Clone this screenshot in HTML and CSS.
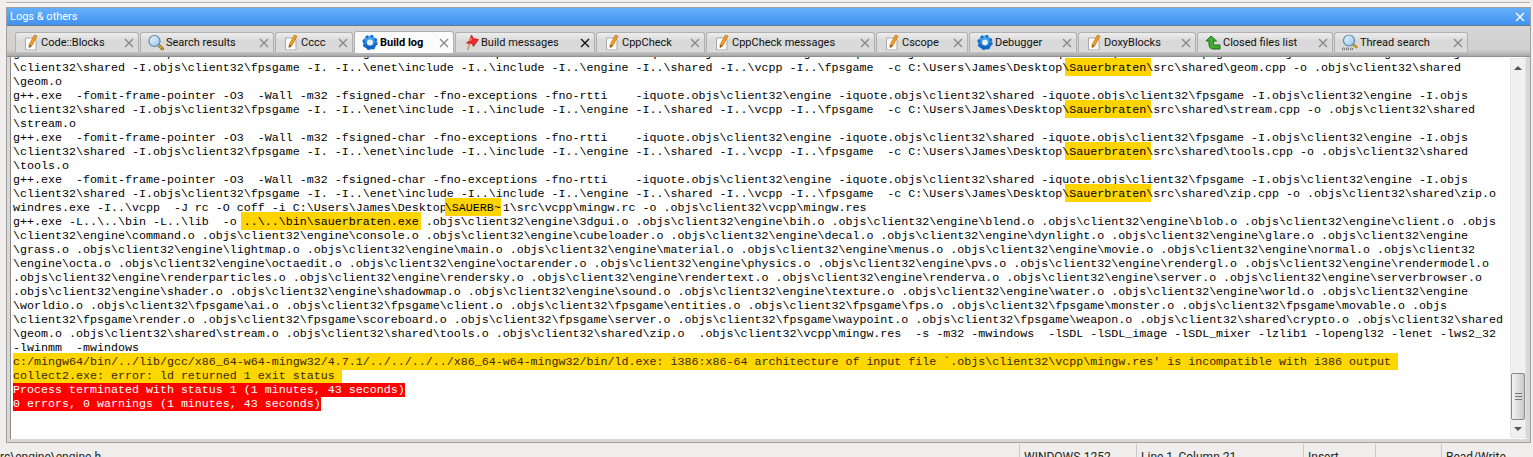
FILE: index.html
```html
<!DOCTYPE html>
<html lang="en">
<head>
<meta charset="utf-8">
<title>Logs &amp; others</title>
<link rel="stylesheet" href="styles.css">
</head>
<body>
<div class="app">
  <div class="topedge"></div>
  <section class="panel">
    <header class="titlebar"><span>Logs &amp; others</span><svg class="closeico" viewBox="0 0 10 10"><use href="#cross"/></svg></header>
    <div class="panelbody">
      <div class="tabstrip">
        <div class="tab"><svg class="ico" viewBox="0 0 16 16"><use href="#pencil"/></svg><span class="lbl">Code::Blocks</span><svg class="x" viewBox="0 0 10 10"><use href="#cross"/></svg></div>
        <div class="tab"><svg class="ico" viewBox="0 0 16 16"><use href="#lens"/></svg><span class="lbl">Search results</span><svg class="x" viewBox="0 0 10 10"><use href="#cross"/></svg></div>
        <div class="tab"><svg class="ico" viewBox="0 0 16 16"><use href="#pencil"/></svg><span class="lbl">Cccc</span><svg class="x" viewBox="0 0 10 10"><use href="#cross"/></svg></div>
        <div class="tab active"><svg class="ico" viewBox="0 0 16 16"><use href="#gear"/></svg><span class="lbl">Build log</span><svg class="x" viewBox="0 0 10 10"><use href="#cross"/></svg></div>
        <div class="tab"><svg class="ico" viewBox="0 0 16 16"><use href="#pin"/></svg><span class="lbl">Build messages</span><svg class="x dark" viewBox="0 0 10 10"><use href="#cross"/></svg></div>
        <div class="tab"><svg class="ico" viewBox="0 0 16 16"><use href="#pencil"/></svg><span class="lbl">CppCheck</span><svg class="x" viewBox="0 0 10 10"><use href="#cross"/></svg></div>
        <div class="tab"><svg class="ico" viewBox="0 0 16 16"><use href="#pencil"/></svg><span class="lbl">CppCheck messages</span><svg class="x" viewBox="0 0 10 10"><use href="#cross"/></svg></div>
        <div class="tab"><svg class="ico" viewBox="0 0 16 16"><use href="#pencil"/></svg><span class="lbl">Cscope</span><svg class="x" viewBox="0 0 10 10"><use href="#cross"/></svg></div>
        <div class="tab"><svg class="ico" viewBox="0 0 16 16"><use href="#gear"/></svg><span class="lbl">Debugger</span><svg class="x" viewBox="0 0 10 10"><use href="#cross"/></svg></div>
        <div class="tab"><svg class="ico" viewBox="0 0 16 16"><use href="#pencil"/></svg><span class="lbl">DoxyBlocks</span><svg class="x" viewBox="0 0 10 10"><use href="#cross"/></svg></div>
        <div class="tab"><svg class="ico" viewBox="0 0 16 16"><use href="#back"/></svg><span class="lbl">Closed files list</span><svg class="x" viewBox="0 0 10 10"><use href="#cross"/></svg></div>
        <div class="tab"><svg class="ico" viewBox="0 0 16 16"><use href="#lensdots"/></svg><span class="lbl">Thread search</span><svg class="x" viewBox="0 0 10 10"><use href="#cross"/></svg></div>
      </div>
      <div class="logframe">
        <div class="log">
          <div class="line">g++.exe  -fomit-frame-pointer -O3  -Wall -m32 -fsigned-char -fno-exceptions -fno-rtti    -iquote.objs\client32\engine -iquote.objs\client32\shared -iquote.objs\client32\fpsgame -I.objs\client32\engine -I.objs</div>
          <div class="line">\client32\shared -I.objs\client32\fpsgame -I. -I..\enet\include -I..\include -I..\engine -I..\shared -I..\vcpp -I..\fpsgame  -c C:\Users\James\Desktop<span class="hl">\Sauerbraten\</span>src\shared\geom.cpp -o .objs\client32\shared</div>
          <div class="line">\geom.o</div>
          <div class="line">g++.exe  -fomit-frame-pointer -O3  -Wall -m32 -fsigned-char -fno-exceptions -fno-rtti    -iquote.objs\client32\engine -iquote.objs\client32\shared -iquote.objs\client32\fpsgame -I.objs\client32\engine -I.objs</div>
          <div class="line">\client32\shared -I.objs\client32\fpsgame -I. -I..\enet\include -I..\include -I..\engine -I..\shared -I..\vcpp -I..\fpsgame  -c C:\Users\James\Desktop<span class="hl">\Sauerbraten\</span>src\shared\stream.cpp -o .objs\client32\shared</div>
          <div class="line">\stream.o</div>
          <div class="line">g++.exe  -fomit-frame-pointer -O3  -Wall -m32 -fsigned-char -fno-exceptions -fno-rtti    -iquote.objs\client32\engine -iquote.objs\client32\shared -iquote.objs\client32\fpsgame -I.objs\client32\engine -I.objs</div>
          <div class="line">\client32\shared -I.objs\client32\fpsgame -I. -I..\enet\include -I..\include -I..\engine -I..\shared -I..\vcpp -I..\fpsgame  -c C:\Users\James\Desktop<span class="hl">\Sauerbraten\</span>src\shared\tools.cpp -o .objs\client32\shared</div>
          <div class="line">\tools.o</div>
          <div class="line">g++.exe  -fomit-frame-pointer -O3  -Wall -m32 -fsigned-char -fno-exceptions -fno-rtti    -iquote.objs\client32\engine -iquote.objs\client32\shared -iquote.objs\client32\fpsgame -I.objs\client32\engine -I.objs</div>
          <div class="line">\client32\shared -I.objs\client32\fpsgame -I. -I..\enet\include -I..\include -I..\engine -I..\shared -I..\vcpp -I..\fpsgame  -c C:\Users\James\Desktop<span class="hl">\Sauerbraten\</span>src\shared\zip.cpp -o .objs\client32\shared\zip.o</div>
          <div class="line">windres.exe -I..\vcpp  -J rc -O coff -i C:\Users\James\Desktop<span class="hl2">\SAUERB~</span>1\src\vcpp\mingw.rc -o .objs\client32\vcpp\mingw.res</div>
          <div class="line">g++.exe -L..\..\bin -L..\lib  -o <span class="hl3">..\..\bin\sauerbraten.exe</span> .objs\client32\engine\3dgui.o .objs\client32\engine\bih.o .objs\client32\engine\blend.o .objs\client32\engine\blob.o .objs\client32\engine\client.o .objs</div>
          <div class="line">\client32\engine\command.o .objs\client32\engine\console.o .objs\client32\engine\cubeloader.o .objs\client32\engine\decal.o .objs\client32\engine\dynlight.o .objs\client32\engine\glare.o .objs\client32\engine</div>
          <div class="line">\grass.o .objs\client32\engine\lightmap.o .objs\client32\engine\main.o .objs\client32\engine\material.o .objs\client32\engine\menus.o .objs\client32\engine\movie.o .objs\client32\engine\normal.o .objs\client32</div>
          <div class="line">\engine\octa.o .objs\client32\engine\octaedit.o .objs\client32\engine\octarender.o .objs\client32\engine\physics.o .objs\client32\engine\pvs.o .objs\client32\engine\rendergl.o .objs\client32\engine\rendermodel.o</div>
          <div class="line">.objs\client32\engine\renderparticles.o .objs\client32\engine\rendersky.o .objs\client32\engine\rendertext.o .objs\client32\engine\renderva.o .objs\client32\engine\server.o .objs\client32\engine\serverbrowser.o</div>
          <div class="line">.objs\client32\engine\shader.o .objs\client32\engine\shadowmap.o .objs\client32\engine\sound.o .objs\client32\engine\texture.o .objs\client32\engine\water.o .objs\client32\engine\world.o .objs\client32\engine</div>
          <div class="line">\worldio.o .objs\client32\fpsgame\ai.o .objs\client32\fpsgame\client.o .objs\client32\fpsgame\entities.o .objs\client32\fpsgame\fps.o .objs\client32\fpsgame\monster.o .objs\client32\fpsgame\movable.o .objs</div>
          <div class="line">\client32\fpsgame\render.o .objs\client32\fpsgame\scoreboard.o .objs\client32\fpsgame\server.o .objs\client32\fpsgame\waypoint.o .objs\client32\fpsgame\weapon.o .objs\client32\shared\crypto.o .objs\client32\shared</div>
          <div class="line">\geom.o .objs\client32\shared\stream.o .objs\client32\shared\tools.o .objs\client32\shared\zip.o  .objs\client32\vcpp\mingw.res  -s -m32 -mwindows  -lSDL -lSDL_image -lSDL_mixer -lzlib1 -lopengl32 -lenet -lws2_32</div>
          <div class="line">-lwinmm  -mwindows</div>
          <div class="line"><span class="warn tall">c:/mingw64/bin/../lib/gcc/x86_64-w64-mingw32/4.7.1/../../../../x86_64-w64-mingw32/bin/ld.exe: i386:x86-64 architecture of input file `.objs\client32\vcpp\mingw.res' is incompatible with i386 output </span></div>
          <div class="line"><span class="warn">collect2.exe: error: ld returned 1 exit status </span></div>
          <div class="line"><span class="err">Process terminated with status 1 (1 minutes, 43 seconds)</span></div>
          <div class="line"><span class="err">0 errors, 0 warnings (1 minutes, 43 seconds)</span></div>
        </div>
        <div class="scrollbar">
          <span class="arrow up"></span>
          <div class="track"><div class="thumb"><span class="grip"></span></div></div>
          <span class="arrow down"></span>
        </div>
      </div>
    </div>
  </section>
  <footer class="status">
    <div class="cell path">rc\engine\engine.h</div>
    <div class="cell enc">WINDOWS-1252</div>
    <div class="cell pos">Line 1, Column 21</div>
    <div class="cell ins">Insert</div>
    <div class="cell blank"></div>
    <div class="cell rw">Read/Write</div>
  </footer>
</div>

<svg class="defs" width="0" height="0" aria-hidden="true">
  <defs>
    <linearGradient id="gearfill" x1="0" y1="0" x2="0" y2="1"><stop offset="0" stop-color="#4aa8ee"/><stop offset="1" stop-color="#0b5fc0"/></linearGradient>
    <linearGradient id="lensfill" x1="0" y1="0" x2="1" y2="1"><stop offset="0" stop-color="#f2f9ff"/><stop offset="1" stop-color="#8fc2e8"/></linearGradient>
    <symbol id="cross" viewBox="0 0 10 10">
      <path d="M1 1l8 8M9 1l-8 8" fill="none" stroke="currentColor" stroke-width="1.400"/>
    </symbol>
    <symbol id="pencil" viewBox="0 0 16 16">
      <path d="M2.500 3.500h8.500l2 2v10h-10.500z" fill="#fbfaf6" stroke="#a9a9a9"/>
      <path d="M11.500 .5l2.500 1.200-5.500 9.800-2.500 1.500.2-2.800z" fill="#f4a11e" stroke="#b9650c" stroke-width=".7"/>
      <path d="M6.500 10.300l-.2 2.700 2.200-1.400z" fill="#6b4a2a"/>
    </symbol>
    <symbol id="lens" viewBox="0 0 16 16">
      <path d="M10 10l4.500 4.300" stroke="#7b6212" stroke-width="3" stroke-linecap="round"/>
      <path d="M10.500 10.500l4 3.800" stroke="#e3b93a" stroke-width="1.300" stroke-linecap="round"/>
      <circle cx="6.500" cy="6.500" r="5.500" fill="url(#lensfill)" stroke="#5a86a8" stroke-width="1.200"/>
    </symbol>
    <symbol id="lensdots" viewBox="0 0 16 16">
      <path d="M10.500 9.500l4 3" stroke="#c09a1c" stroke-width="2.800" stroke-linecap="round"/>
      <circle cx="7" cy="6" r="5.500" fill="url(#lensfill)" stroke="#5a86a8" stroke-width="1.200"/>
      <path d="M.5 13.500h2v2h-2zM4.500 13.500h2v2h-2zM8.500 13.500h2v2h-2z" fill="#fff" stroke="#666" stroke-width=".8"/>
    </symbol>
    <symbol id="gear" viewBox="0 0 16 16">
      <circle cx="8" cy="8" r="5" fill="none" stroke="url(#gearfill)" stroke-width="4"/>
      <circle cx="8" cy="8" r="6.500" fill="none" stroke="#0d6ccc" stroke-width="2.400" stroke-dasharray="2.400 2.700"/>
      <circle cx="8" cy="8" r="2.500" fill="#dff0ff"/>
    </symbol>
    <symbol id="pin" viewBox="0 0 16 16">
      <path d="M6.500 9l-2 7" stroke="#c9985a" stroke-width="1.600"/>
      <path d="M8.500 .5l2 3.500 5 1-5 7-1.500-3-5.500-.5 3-2.500z" fill="#ee2a2a" stroke="#b21717" stroke-width=".7"/>
      <path d="M6.500 6.500l2.500-3" stroke="#ffb0b0" stroke-width="1"/>
    </symbol>
    <symbol id="back" viewBox="0 0 16 16">
      <path d="M6 1.500l-5 5h3v3.500c0 3 2 4.500 4 4.500h7v-4h-5c-1 0-1.500-.5-1.500-1.500v-2.500h3z" fill="#3fae2e" stroke="#1e6d16"/>
    </symbol>
  </defs>
</svg>
</body>
</html>
```
FILE: styles.css
```css
* { box-sizing: border-box; }
html, body { margin: 0; padding: 0; width: 1533px; height: 457px; overflow: hidden; background: #f0eeec; }
.defs { position: absolute; }
.app { display: flex; flex-direction: column; height: 457px; }
.topedge { height: 7px; flex: none; margin: 0 3px 0 6px; background: #f6f6f6; border-top: 2px solid #f0eeec; box-shadow: inset 0 1px 0 #b4b4b4; }
.panel { flex: none; height: 436px; margin: 0 2px 0 6px; display: flex; flex-direction: column; background: #d8d8d8; border: 1px solid #a0a0a0; }
.titlebar { flex: none; height: 18px; display: flex; align-items: center; justify-content: space-between; padding: 0 5px 0 3px; color: #fff; font: 11px Roboto, "Liberation Sans", sans-serif; background: linear-gradient(#66b0fb, #3f92f2); border-bottom: 1px solid #6d7a88; }
.closeico { width: 10px; height: 10px; color: #fff; }
.panelbody { flex: 1; min-height: 0; display: flex; flex-direction: column; }
.tabstrip { flex: none; height: 31px; padding: 5px 0 3px 8px; display: grid; grid-template-columns: 125px 135px 79px 101px 141px 110px 170px 93px 109px 119px 137px 135px; justify-content: start; align-items: end; background: linear-gradient(#d6d6d6, #d0d0d0 80%, #a8a8a8); border-bottom: 1px solid #8f8f8f; }
.tab { width: calc(100% - 1px); height: 20px; margin-bottom: 1px; display: flex; align-items: center; gap: 2px; padding: 0 4px 0 7px; border: 1px solid #b0b0b0; border-bottom: 0; border-radius: 3px 3px 0 0; background: linear-gradient(#ededed 0%, #d8d8d8 45%, #dcdcdc 100%); font: 11px Roboto, "Liberation Sans", sans-serif; color: #111; }
.tab.active { height: 22px; margin-bottom: 0; background: #fbfbfb; font-weight: 700; color: #000; }
.ico { flex: none; width: 16px; height: 17px; }
.lbl { flex: 1; min-width: 0; white-space: nowrap; }
.x { flex: none; width: 10px; height: 10px; color: #8a8a8a; }
.x.dark { color: #111; }
.logframe { flex: 1; min-height: 0; display: flex; background: #fff; margin: 0 4px 3px 3px; border-left: 1px solid #8a8a8a; }
.log { flex: 1; min-width: 0; overflow: hidden; padding: 0 0 0 2px; font: 11.67px/14px "Liberation Mono", "Courier New", monospace; color: #000; }
.log .line:first-child { margin-top: -10px; }
.line { height: 14px; white-space: pre; }
.hl { padding: 3px 0 1px; background: linear-gradient(#ffd400, #ffd400) 3px 0 / calc(100% - 5px) 100% no-repeat; }
.hl2 { padding: 3px 0 1px; margin-left: -2px; margin-right: 2px; background: #ffd400; }
.hl3 { padding: 3px 2px 1px 3px; margin: 0 -2px 0 -3px; background: #ffd400; }
.warn { background: #ffd700; color: #3a2800; }
.warn.tall { padding: 2px 0 1px; }
.err { background: #ff0000; color: #fff; }
.scrollbar { flex: none; width: 16px; display: flex; flex-direction: column; background: #f0f0f0; margin: 1px 0 1px; border: 1px solid #e6e6e6; }
.arrow { flex: none; height: 17px; display: flex; align-items: center; justify-content: center; }
.arrow::before { content: ""; border-left: 4px solid transparent; border-right: 4px solid transparent; }
.arrow.up::before { border-bottom: 4px solid #555; }
.arrow.down::before { border-top: 4px solid #555; }
.track { flex: 1; display: flex; flex-direction: column; justify-content: flex-end; }
.thumb { height: 47px; display: flex; align-items: center; justify-content: center; border: 1px solid #8a8a8a; border-radius: 2px; background: linear-gradient(90deg, #f3f3f3, #c9c9c9); }
.grip { width: 7px; height: 7px; border-top: 1px solid #777; border-bottom: 1px solid #777; background: linear-gradient(#777, #777) center/100% 1px no-repeat; }
.status { flex: none; height: 14px; display: flex; background: #f0eeec; font: 12px Roboto, "Liberation Sans", sans-serif; color: #222; overflow: hidden; }
.cell { padding: 6px 0 0 4px; border-left: 1px solid #c8c8c8; white-space: nowrap; line-height: 14px; margin-top: 1px; }
.path { width: 1019px; border-left: 0; padding-left: 0; }
.enc { width: 117px; }
.pos { width: 167px; }
.ins { width: 72px; }
.blank { width: 66px; }
.rw { flex: 1; }
```
